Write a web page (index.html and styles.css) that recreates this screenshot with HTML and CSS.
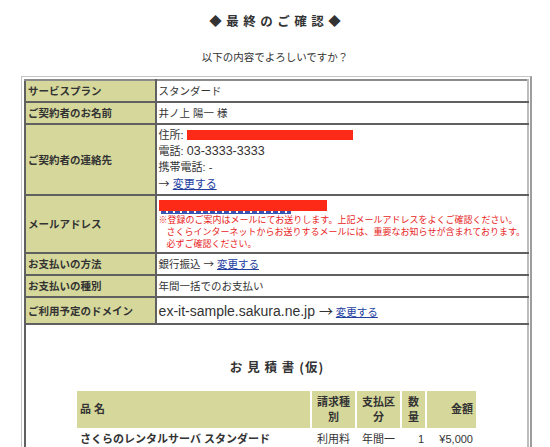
FILE: index.html
```html
<!DOCTYPE html>
<html lang="ja">
<head>
<meta charset="utf-8">
<title>最終のご確認</title>
<link rel="stylesheet" href="styles.css">
</head>
<body>
<h1 class="title">◆最終のご確認◆</h1>
<p class="lead">以下の内容でよろしいですか？</p>
<div class="frame">
  <table class="confirm">
    <tr>
      <th>サービスプラン</th>
      <td>スタンダード</td>
    </tr>
    <tr>
      <th>ご契約者のお名前</th>
      <td>井ノ上 陽一 様</td>
    </tr>
    <tr>
      <th>ご契約者の連絡先</th>
      <td class="contact">
        <div class="line">住所: <span class="redact-addr"></span></div>
        <div class="line">電話: <span class="tel">03-3333-3333</span></div>
        <div class="line">携帯電話: -</div>
        <div class="line"><span class="arrow">→</span> <a href="#" class="link">変更する</a></div>
      </td>
    </tr>
    <tr>
      <th>メールアドレス</th>
      <td>
        <div class="mail">
          <span class="redact-mail"></span>
          <span class="mail-tail"></span>
        </div>
        <div class="notice">
          <div class="nline">※登録のご案内はメールにてお送りします。上記メールアドレスをよくご確認ください。</div>
          <div class="nline indent">さくらインターネットからお送りするメールには、重要なお知らせが含まれております。</div>
          <div class="nline indent">必ずご確認ください。</div>
        </div>
      </td>
    </tr>
    <tr>
      <th>お支払いの方法</th>
      <td>銀行振込 <span class="arrow">→</span> <a href="#" class="link">変更する</a></td>
    </tr>
    <tr>
      <th>お支払いの種別</th>
      <td>年間一括でのお支払い</td>
    </tr>
    <tr>
      <th>ご利用予定のドメイン</th>
      <td class="domain"><span class="domain-name">ex-it-sample.sakura.ne.jp <span class="arrow">→</span></span> <a href="#" class="link">変更する</a></td>
    </tr>
    <tr>
      <td colspan="2" class="estimate-cell">
        <h2 class="est-title">お 見 積 書 (仮)</h2>
        <table class="estimate">
          <colgroup>
            <col class="w-name">
            <col class="w-type">
            <col class="w-pay">
            <col class="w-qty">
            <col class="w-amt">
          </colgroup>
          <tr>
            <th class="left">品 名</th>
            <th>請求種別</th>
            <th>支払区分</th>
            <th>数量</th>
            <th class="right">金額</th>
          </tr>
          <tr>
            <td class="left bold">さくらのレンタルサーバ スタンダード</td>
            <td>利用料</td>
            <td>年間一括</td>
            <td class="right qty">1</td>
            <td class="right">¥5,000</td>
          </tr>
        </table>
      </td>
    </tr>
  </table>
</div>
</body>
</html>
```

FILE: styles.css
```css
body {
  margin: 0;
  background: #ffffff;
  color: #333333;
  font-family: "Liberation Sans", "Noto Sans CJK JP", sans-serif;
}

.title {
  margin: 12px 0 0;
  font-family: "Noto Sans CJK JP", sans-serif;
  font-size: 12.5px;
  line-height: 18px;
  font-weight: bold;
  letter-spacing: 4.5px;
  text-indent: 4.5px;
  text-align: center;
  color: #333333;
}

.lead {
  margin: 19px 0 0;
  font-size: 10.5px;
  line-height: 16px;
  text-align: center;
}

.frame {
  margin: 11px 0 0 21px;
  width: 505px;
  padding: 2px 1px 2px 2px;
  border-style: solid;
  border-width: 1px 2px 2px 1px;
  border-color: #c4c4c4 #9d9d9d #9d9d9d #c4c4c4;
}

.confirm {
  width: 100%;
  border-collapse: collapse;
}

.confirm > tbody > tr > th,
.confirm > tbody > tr > td {
  border: 2px solid #606060;
  padding: 2px;
  font-size: 10.5px;
  line-height: 16px;
  text-align: left;
  vertical-align: middle;
}

.confirm > tbody > tr > td {
  border-right-color: #bdbdbd;
}

.confirm > tbody > tr:first-child > th,
.confirm > tbody > tr:first-child > td {
  border-top-color: #8c8c8c;
}

.confirm > tbody > tr > th {
  width: 126px;
  background: #d6d89b;
  font-weight: bold;
  color: #333333;
}

.arrow {
  font-family: "Noto Sans CJK JP", sans-serif;
}

.contact .line {
  font-size: 11px;
  line-height: 16px;
}

.tel {
  font-size: 12.5px;
}

.redact-addr {
  display: inline-block;
  width: 166px;
  height: 10px;
  background: #fd2a17;
  vertical-align: -1px;
}

.link {
  color: #23409f;
  text-decoration: underline;
}

.mail {
  padding-top: 2px;
  height: 14px;
}

.redact-mail {
  display: block;
  width: 168px;
  height: 11px;
  background: #fd2a17;
}

.mail-tail {
  display: block;
  width: 130px;
  height: 2px;
  margin-left: 2px;
  background: repeating-linear-gradient(90deg, #3a55b0 0 5px, transparent 5px 7px);
  border-bottom: 1px solid #3a55b0;
}

.notice {
  color: #e81b1b;
  font-family: "Noto Sans CJK JP", sans-serif;
  font-size: 9px;
  line-height: 12px;
}

.nline {
  white-space: nowrap;
}

.nline.indent {
  padding-left: 8px;
}

.domain {
  white-space: nowrap;
}

.domain-name {
  font-size: 14px;
  line-height: 20px;
}

.confirm > tbody > tr > td.estimate-cell {
  padding: 0 0 10px;
  text-align: center;
}

.est-title {
  margin: 33px 0 13px;
  font-family: "Noto Sans CJK JP", sans-serif;
  font-size: 12.5px;
  line-height: 18px;
  font-weight: bold;
  letter-spacing: 1px;
  text-indent: 1px;
  color: #333333;
}

.estimate {
  width: 403px;
  margin: 0 auto;
  table-layout: fixed;
  border-collapse: separate;
  border-spacing: 2px;
}

.w-name { width: 233px; }
.w-type { width: 43px; }
.w-pay { width: 43px; }
.w-qty { width: 23px; }
.w-amt { width: 49px; }

.estimate th {
  background: #d6d89b;
  font-size: 11px;
  line-height: 14.5px;
  font-weight: bold;
  padding: 4px 3px;
  text-align: center;
  vertical-align: middle;
}

.estimate td {
  font-size: 11px;
  line-height: 14px;
  padding: 2px 3px;
  text-align: center;
  vertical-align: top;
}

.estimate .left {
  text-align: left;
}

.estimate .right {
  text-align: right;
}

.estimate .bold {
  font-weight: bold;
}

.estimate .qty {
  padding-right: 1px;
}
```
